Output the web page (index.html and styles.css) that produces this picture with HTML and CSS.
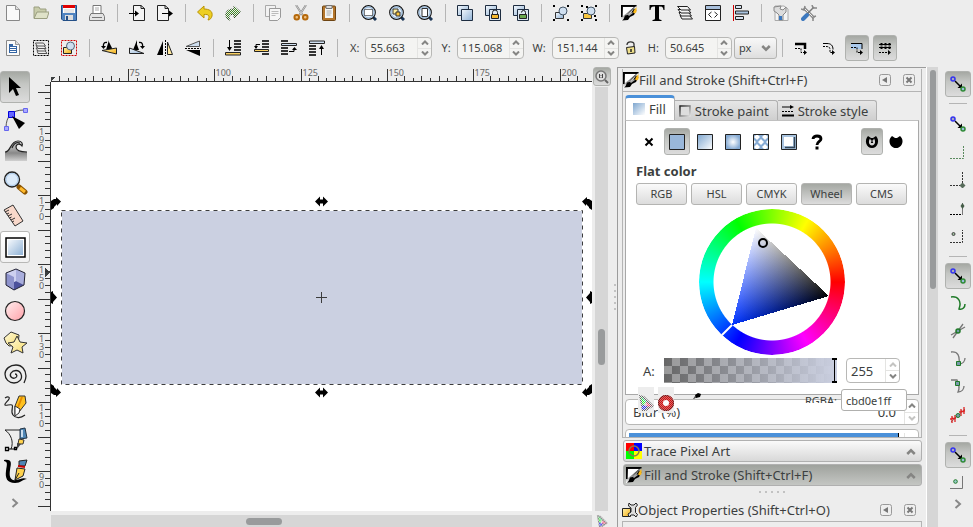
FILE: index.html
```html
<!DOCTYPE html>
<html lang="en">
<head>
    <meta charset="UTF-8">
    <meta name="viewport" content="width=device-width, initial-scale=1.0">
    <title>Vector editor</title>
    <link rel="stylesheet" href="styles.css">
</head>
<body>
    <svg class="defs" width="0" height="0" aria-hidden="true">
        <defs>
            <linearGradient id="gBlue" x1="0" y1="0" x2="1" y2="1"><stop offset="0" stop-color="#f4f8fc"/><stop offset="1" stop-color="#8fb2d6"/></linearGradient>
            <linearGradient id="gSteel" x1="0" y1="0" x2="1" y2="1"><stop offset="0" stop-color="#7ea6cf"/><stop offset="1" stop-color="#ffffff"/></linearGradient>
            <linearGradient id="gGold" x1="0" y1="0" x2="1" y2="1"><stop offset="0" stop-color="#fff3b0"/><stop offset="1" stop-color="#f5ae10"/></linearGradient>
            <linearGradient id="gStar" x1="0" y1="0" x2="1" y2="1"><stop offset="0" stop-color="#fffbe0"/><stop offset="1" stop-color="#f7dc6a"/></linearGradient>
            <linearGradient id="gInk" x1="0" y1="0" x2="0" y2="1"><stop offset="0" stop-color="#000"/><stop offset="1" stop-color="#fff"/></linearGradient>
            <linearGradient id="gFrame" x1="0" y1="0" x2="1" y2="1"><stop offset="0" stop-color="#222"/><stop offset="1" stop-color="#ddd"/></linearGradient>
            <radialGradient id="gRadial"><stop offset="0" stop-color="#fff"/><stop offset="1" stop-color="#86abd4"/></radialGradient>
            <linearGradient id="gWave" x1="0" y1="0" x2="0" y2="1"><stop offset="0" stop-color="#e4e4e4"/><stop offset=".6" stop-color="#888"/><stop offset="1" stop-color="#d0d0d0"/></linearGradient>
            <linearGradient id="gPink" x1="0" y1="0" x2="1" y2="1"><stop offset="0" stop-color="#fff0f0"/><stop offset="1" stop-color="#ffa0a8"/></linearGradient>
            <pattern id="dither" width="2" height="2" patternUnits="userSpaceOnUse"><path d="M0 0h1v1H0zM1 1h1v1H1z" fill="#ededed"/></pattern>
            <symbol id="up" viewBox="0 0 8 5"><path d="M1 4.5 4 1.5 7 4.5" fill="none" stroke="currentColor" stroke-width="2"/></symbol>
            <symbol id="down" viewBox="0 0 8 5"><path d="M1 .5 4 3.5 7 .5" fill="none" stroke="currentColor" stroke-width="2"/></symbol>
            <symbol id="right" viewBox="0 0 8 10"><path d="M1.5 1 6 5 1.5 9" fill="none" stroke="#888" stroke-width="2"/></symbol>
            <symbol id="brush" viewBox="0 0 16 16">
                <path d="M0 0h15.500L8 9 1 16H0z" fill="url(#gInk)"/><path d="M0 0h15.500v1.500H0zM0 0h1.500v12H0z"/><path d="M2 2h11L6 8l-4 3z" fill="#fff"/>
                <path d="M1 15.500c2-1 2-3 3-5l5-1 4-6 2.500 1.500-2.500 5-4 2-2 3z"/><path d="M7 10l4-3 1 1-4 3z" fill="#aaa"/><path d="M13 5l2.500-3v5l-1.500 1.500-2-1z" fill="#fbb917"/>
            </symbol>
            <symbol id="chain" viewBox="0 0 16 16">
                <path d="M5 5l5 5" stroke="#000" stroke-width="1.500"/><path d="M12 12H7.500L12 7.500z" fill="#000"/>
                <circle cx="3" cy="3" r="2" fill="#aab" stroke="#3333f0" stroke-width="1.500"/><circle cx="13" cy="13" r="2" fill="#9bd" stroke="#2f8a36" stroke-width="1.500"/>
            </symbol>
            <symbol id="glass" viewBox="0 0 16 16"><path d="M11 11l4 4" stroke="#1b3555" stroke-width="3"/><circle cx="7.500" cy="7.500" r="6.800" fill="#e4eef8" stroke="#111" stroke-width="1.200"/><circle cx="7.500" cy="7.500" r="5.500" fill="none" stroke="#9dbbd9" stroke-width="1.300"/></symbol>
            <symbol id="back" viewBox="0 0 12 12"><rect x=".5" y=".5" width="11" height="11" rx="2" fill="#eee" stroke="#999"/><path d="M8 3v6L3 6z" fill="#777"/></symbol>
            <symbol id="close" viewBox="0 0 12 12"><rect x=".5" y=".5" width="11" height="11" rx="2" fill="#eee" stroke="#999"/><path d="M3.500 3.500l5 5M8.500 3.500l-5 5" stroke="#777" stroke-width="2"/></symbol>
            <symbol id="gamut" viewBox="0 0 16 16"><path d="M1 0l5 1 10 10-8 5H4z" fill="#666"/><path d="M3 2l5 5-3 5z" fill="#2f2"/><path d="M3 2l6 5-1 2z" fill="#3d8"/><path d="M8 7l6 4-7 1z" fill="#f36"/><path d="M4 10l5 1-2 4-3-1z" fill="#22e"/><path d="M6 8l3 1-2 2z" fill="#fff"/><path d="M0 0h16v16H0z" fill="url(#dither)"/></symbol>
        </defs>
    </svg>

    <nav class="toolbar commands" aria-label="Commands">
        <button title="New"><svg viewBox="0 0 16 16"><path d="M1.500.5h9l4 4v11h-13z" fill="#fafafa" stroke="#888"/><path d="M10.500.5v4h4" fill="#ddd" stroke="#999"/></svg></button>
        <button title="Open"><svg viewBox="0 0 16 16"><path d="M1 13V2h5l1 2h6v4" fill="#c8ccaa" stroke="#9a9e80"/><path d="M1 13.500 4 7h12l-2 6.500z" fill="#dfe2c8" stroke="#9a9e80"/></svg></button>
        <button title="Save"><svg viewBox="0 0 16 16"><path d="M.5.5h15v15H2l-1.500-1.500z" fill="#4f83c0" stroke="#234f86"/><path d="M2 0h12v3H2z" fill="#e00000"/><path d="M2 3h12v5H2z" fill="#fff"/><path d="M3 5h10M3 7h10" stroke="#ccc"/><path d="M4 10h8v5H4z" fill="#ddd"/><path d="M5 11h2v4H5z" fill="#234f86"/></svg></button>
        <button title="Print"><svg viewBox="0 0 16 16"><path d="M4 8V.5h8V8" fill="#fff" stroke="#777"/><path d="M6 3h4M6 5h4" stroke="#aaa"/><path d="M2 8.500h12l1.500 3v4H.5v-4z" fill="#e4e4e4" stroke="#777"/><path d="M3 12.500h10" stroke="#777"/></svg></button>
        <span class="sep"></span>
        <button title="Import"><svg viewBox="0 0 16 16"><path d="M4.500.5H12l3.500 3v12h-11z" fill="#f4f4f4" stroke="#222"/><path d="M12 .5v3h3.500" fill="none" stroke="#222"/><path d="M0 8.500h7" stroke="#000"/><path d="M6 5.500 10 8.500l-4 3z"/></svg></button>
        <button title="Export"><svg viewBox="0 0 16 16"><path d="M.5.5H8l3.500 3v12H.5z" fill="#f4f4f4" stroke="#222"/><path d="M8 .5v3h3.500" fill="none" stroke="#222"/><path d="M5 8.500h8" stroke="#000"/><path d="M12 5.500 16 8.500l-4 3z"/></svg></button>
        <span class="sep"></span>
        <button title="Undo"><svg viewBox="0 0 16 16"><path d="M.5 7 7 1v3c5 0 9 2 8 7-.5 2-2 4-4 4 2-4 1-6-4-5.500V13z" fill="#edcf22" stroke="#b99305"/></svg></button>
        <button title="Redo"><svg viewBox="0 0 16 16"><path d="M15.500 7 9 1v3C4 4 0 6 1 11c.5 2 2 4 4 4-2-4-1-6 4-5.500V13z" fill="#3f8a24" stroke="#2c4a20"/><path d="M0 0h16v16H0z" fill="url(#dither)"/></svg></button>
        <span class="sep"></span>
        <button title="Copy"><svg viewBox="0 0 16 16"><path d="M.5.5h10v11H.5z" fill="#f2f2f2" stroke="#aaa"/><path d="M4.500 3.500h11v9l-3 3h-8z" fill="#f6f6f6" stroke="#999"/><path d="M6.500 6.500h7M6.500 8.500h7M6.500 10.500h4" stroke="#bbb"/></svg></button>
        <button title="Cut"><svg viewBox="0 0 16 16"><path d="M3 0l6.500 10M13 0 6.500 10" stroke="#888" stroke-width="2"/><path d="M3 0l6.500 10M13 0 6.500 10" stroke="#ddd" stroke-width=".8"/><g fill="#f0c080" stroke="#b5690c" stroke-width="2"><rect x="1.500" y="10" width="4.500" height="4.500" rx="2"/><rect x="10" y="10" width="4.500" height="4.500" rx="2"/></g></svg></button>
        <button title="Paste"><svg viewBox="0 0 16 16"><rect x="1.500" y="1" width="13" height="14.500" rx="1" fill="#b5762b" stroke="#6d4412"/><path d="M4 3h8v10H4z" fill="#f6f6f2"/><path d="M5.500 6h5M5.500 8h5M5.500 10h4" stroke="#aaa"/><path d="M5 .5h6v3H5z" fill="#ddd" stroke="#777"/></svg></button>
        <span class="sep"></span>
        <button title="Zoom selection"><svg viewBox="0 0 16 16"><use href="#glass"/><path d="M3.500 4.500h8v6h-8z" fill="#fff" stroke="#000" stroke-dasharray="1 1"/></svg></button>
        <button title="Zoom drawing"><svg viewBox="0 0 16 16"><use href="#glass"/><path d="M4 4h5v5H4z" fill="#fff0a0" stroke="#333"/><path d="M7 7h4v4H7z" fill="#fbc53b" stroke="#333"/></svg></button>
        <button title="Zoom page"><svg viewBox="0 0 16 16"><use href="#glass"/><path d="M5 3.500h5.500v8H5z" fill="#fff" stroke="#333"/></svg></button>
        <span class="sep"></span>
        <button title="Duplicate"><svg viewBox="0 0 16 16"><path d="M.5.5h11v10H.5z" fill="url(#gBlue)" stroke="#1d2c40"/><path d="M4.500 4.500h11v11h-11z" fill="url(#gBlue)" stroke="#1d2c40"/></svg></button>
        <button title="Clone"><svg viewBox="0 0 16 16"><path d="M.5.5h11v10H.5z" fill="url(#gBlue)" stroke="#1d2c40"/><path d="M4.500 4.500h11v11h-11z" fill="#dde8f3" stroke="#1d2c40"/><path d="M7.500 9V7.500a2 2 0 0 1 5 0V9" fill="none" stroke="#222"/><path d="M6.500 9.500h7v4h-7z" fill="#f5b82e" stroke="#222"/></svg></button>
        <button title="Unlink clone"><svg viewBox="0 0 16 16"><path d="M.5.5h11v10H.5z" fill="url(#gBlue)" stroke="#1d2c40"/><path d="M4.500 4.500h11v11h-11z" fill="#dde8f3" stroke="#1d2c40"/><path d="M8.500 7.500a2 2 0 0 1 4 0V9" fill="none" stroke="#222"/><path d="M6.500 9.500h7v4h-7z" fill="#6aa84f" stroke="#222"/></svg></button>
        <span class="sep"></span>
        <button title="Group"><svg viewBox="0 0 16 16"><path d="M0 0h2v2H0zM14 0h2v2h-2zM0 14h2v2H0zM14 14h2v2h-2z"/><path d="M2.500 7.500h8v6h-8z" fill="url(#gBlue)" stroke="#333"/><circle cx="10" cy="6" r="4" fill="#cfdff0" stroke="#456"/></svg></button>
        <button title="Ungroup"><svg viewBox="0 0 16 16"><path d="M0 0h2v2H0zM14 0h2v2h-2zM0 14h2v2H0zM14 14h2v2h-2zM5 1h2v2H5zM13 10h2v2h-2zM0 6h2v2H0z"/><path d="M2.500 8.500h8v5h-8z" fill="#f8c740" stroke="#333"/><circle cx="10" cy="6" r="4" fill="#cfdff0" stroke="#456"/></svg></button>
        <span class="sep"></span>
        <button title="Fill and stroke"><svg viewBox="0 0 16 16"><use href="#brush"/></svg></button>
        <button title="Text and font"><svg viewBox="0 0 16 16"><path d="M.5 0h15v5h-1c-.5-3-1-3.500-4.500-3.500V13c0 1.500.5 1.700 2.500 2v1h-9v-1c2-.3 2.500-.5 2.500-2V1.500C2.500 1.500 2 2 1.500 5h-1z"/></svg></button>
        <button title="Layers"><svg viewBox="0 0 16 16"><g fill="#f4f4f4" stroke="#222"><path d="M3 10.500h9.500l3 3.500H5z"/><path d="M2 7.500h9.500l3 3.500H4z"/><path d="M1 4.500h10l3 3.500H4z"/><path d="M.5 1.500h10l3 3.500H4z"/></g></svg></button>
        <button title="XML editor"><svg viewBox="0 0 16 16"><path d="M.5.5h15v15H.5z" fill="#fff" stroke="#222"/><path d="M1 1h14v3H1z" fill="#a9c0dc"/><path d="M1 4.500h14" stroke="#222"/><path d="M6.500 7 3.500 9.500l3 3M9.500 7l3 2.500-3 3" fill="none" stroke="#222"/></svg></button>
        <button title="Align"><svg viewBox="0 0 16 16"><path d="M.5 0v16" stroke="#d00000"/><path d="M2.500.5h6v3h-6zM2.500 11.500h8v3h-8z" fill="#d5e2f0" stroke="#222"/><path d="M2.500 6h13v3h-13z" fill="#a9c4e0" stroke="#222"/></svg></button>
        <span class="sep"></span>
        <button title="Document properties"><svg viewBox="0 0 16 16"><path d="M2 1h9l4 3v11.500H2z" fill="#f5f5f5" stroke="#aaa"/><path d="M1 2v4l3 2 2 2v5h4v-5l3-3V2l-3 3-3-1 1-3z" fill="#ddd" stroke="#888"/><path d="M6 11h3v4H6z" fill="#3c78be"/></svg></button>
        <button title="Preferences"><svg viewBox="0 0 16 16"><path d="M3 3l10 10" stroke="#888" stroke-width="3"/><path d="M3 3l10 10" stroke="#eee"/><path d="M13 2 5 10" stroke="#777" stroke-width="1.500"/><path d="M6 10 2 14" stroke="#3c78be" stroke-width="4" stroke-linecap="round"/><path d="M0 4l3 1 1-4M15 11l-3 1v4M11 0l1 3h4" fill="none" stroke="#888" stroke-width="1.500"/></svg></button>
    </nav>

    <nav class="toolbar controls" aria-label="Tool controls">
        <button title="Select all"><svg viewBox="0 0 16 16"><path d="M1.500.5h9l4 4v11h-13z" fill="#fafafa" stroke="#888"/><path d="M10.500.5v4h4" fill="#ddd" stroke="#999"/><path d="M4 4h4v2H4zM4 6h8v7H4z" fill="#3465a4"/><path d="M5 7.500h6M5 9.500h6M5 11.500h6" stroke="#fff"/></svg></button>
        <button title="Select all in layers"><svg viewBox="0 0 16 16"><path d="M.5.5h15v15H.5z" fill="none" stroke="#000" stroke-dasharray="2 1"/><g fill="#eee" stroke="#555"><path d="M4 10.500h8l2 3H5z"/><path d="M3 8h8l2 3H5z"/><path d="M3 5.500h8l2 3H5z"/><path d="M2.500 3h8l2 3H4z"/></g></svg></button>
        <button title="Deselect"><svg viewBox="0 0 16 16"><path d="M.5.5h15v15H.5z" fill="none" stroke="#d00000" stroke-dasharray="2 1"/><path d="M2.500 7.500h8v6h-8z" fill="url(#gGold)" stroke="#222"/><circle cx="9.500" cy="6" r="4" fill="#cfdff0" stroke="#567"/></svg></button>
        <span class="sep"></span>
        <button title="Rotate left"><svg viewBox="0 0 16 16"><path d="M8 0v10H5zM8 10V2l4 8z"/><path d="M1 10.500 15.500 8v6z" fill="url(#gGold)" stroke="#222"/><path d="M6 2.500C3 2 2 4 2.500 7" fill="none" stroke="#000" stroke-width="1.300"/><path d="M0 6h5L2.500 9z"/></svg></button>
        <button title="Rotate right"><svg viewBox="0 0 16 16"><path d="M8 0v10H4zM7 10V2l3 8z"/><path d="M15 13.500.5 8v5.500z" fill="url(#gBlue)" stroke="#222"/><path d="M10 2.500c3-.5 4 1.500 3.500 4.500" fill="none" stroke="#000" stroke-width="1.300"/><path d="M11 6h5l-2.500 3z"/></svg></button>
        <button title="Flip horizontal"><svg viewBox="0 0 16 16"><path d="M6 1v14H0z"/><path d="M10.500 2v12.500h5z" fill="#ffe9a0" stroke="#222"/><path d="M8.500 0v16" stroke="#000" stroke-dasharray="2 1"/></svg></button>
        <button title="Flip vertical"><svg viewBox="0 0 16 16"><path d="M1 10h14v6z"/><path d="M1 6.500h13.500V1z" fill="#cfdff0" stroke="#555"/><path d="M0 8.500h16" stroke="#000" stroke-dasharray="2 1"/></svg></button>
        <span class="sep"></span>
        <button title="Lower to bottom"><svg viewBox="0 0 16 16"><path d="M9 1h7M9 4h7M9 7h7M9 10h7" stroke="#333" stroke-width="2"/><path d="M4.500 0v9" stroke="#000"/><path d="M2 7h5l-2.500 4z"/><path d="M.5 12.500h15v2.500H.5z" fill="#f8cf62" stroke="#222"/></svg></button>
        <button title="Lower"><svg viewBox="0 0 16 16"><path d="M9 1h7M9 4h7M9 7h7M9 14h7" stroke="#333" stroke-width="2"/><path d="M1.500 9.500h14v2h-14z" fill="#f8cf62" stroke="#222"/><path d="M7 4.500H3V8" fill="none" stroke="#000"/><path d="M1 6h4L3 9z"/></svg></button>
        <button title="Raise"><svg viewBox="0 0 16 16"><path d="M0 1h7M0 8h7M0 11h7M0 14h7" stroke="#333" stroke-width="2"/><path d="M.5 3.500h15v2H.5z" fill="#cfdff0" stroke="#222"/><path d="M8 11.500h5V8" fill="none" stroke="#000"/><path d="M11 10h5l-2.500-3z"/></svg></button>
        <button title="Raise to top"><svg viewBox="0 0 16 16"><path d="M0 6h7M0 9h7M0 12h7M0 15h7" stroke="#333" stroke-width="2"/><path d="M.5 1h15v2.500H.5z" fill="#cfdff0" stroke="#222"/><path d="M12.500 6v9" stroke="#000"/><path d="M10 9h5l-2.500-4z"/></svg></button>
        <span class="sep"></span>
        <div class="field"><label for="x">X:</label><div class="spin"><input id="x" type="text" value="55.663"><span class="steps"><button title="Increase X"><svg><use href="#up"/></svg></button><button title="Decrease X"><svg><use href="#down"/></svg></button></span></div></div>
        <div class="field"><label for="y">Y:</label><div class="spin"><input id="y" type="text" value="115.068"><span class="steps"><button title="Increase Y"><svg><use href="#up"/></svg></button><button title="Decrease Y"><svg><use href="#down"/></svg></button></span></div></div>
        <div class="field"><label for="w">W:</label><div class="spin"><input id="w" type="text" value="151.144"><span class="steps"><button title="Increase width"><svg><use href="#up"/></svg></button><button title="Decrease width"><svg><use href="#down"/></svg></button></span></div></div>
        <button class="lock" title="Lock ratio"><svg viewBox="0 0 16 16"><path d="M4 5c0-4 7-4 7-1v4" fill="none" stroke="#333" stroke-width="1.300"/><path d="M3.500 7.500l8-1 .5 6.500-7.500 1z" fill="#f0e08a" stroke="#222"/><path d="M8 9v3" stroke="#222" stroke-width="1.500"/></svg></button>
        <div class="field"><label for="h">H:</label><div class="spin"><input id="h" type="text" value="50.645"><span class="steps"><button title="Increase height"><svg><use href="#up"/></svg></button><button title="Decrease height"><svg><use href="#down"/></svg></button></span></div></div>
        <div class="unit"><select aria-label="Unit"><option>px</option></select><svg><use href="#down"/></svg></div>
        <span class="sep"></span>
        <button title="Scale stroke"><svg viewBox="0 0 16 16"><path d="M2 4h10v5" fill="none" stroke="#000" stroke-width="2.500"/><path d="M2 8.500h6v4h5" fill="none" stroke="#000" stroke-dasharray="2 1"/><path d="M11 10l3 2.500-3 2.500z"/></svg></button>
        <button title="Scale corners"><svg viewBox="0 0 16 16"><path d="M2 3.500h4c4 0 6 2 6 6" fill="none" stroke="#000"/><path d="M2 6.500h3c3 0 4 1 4 3v3h4" fill="none" stroke="#000" stroke-dasharray="2 1"/><path d="M11 10l3 2.500-3 2.500z"/></svg></button>
        <button class="on" title="Move gradients"><svg viewBox="0 0 16 16"><path d="M2 4h11v5H2z" fill="#a9c9ec"/><path d="M2 3.500h11V9" fill="none" stroke="#000"/><path d="M2 7.500h6v5h5" fill="none" stroke="#000" stroke-dasharray="2 1"/><path d="M11 10l3 2.500-3 2.500z"/></svg></button>
        <button class="on" title="Move patterns"><svg viewBox="0 0 16 16"><path d="M2 4.500h12M2 7.500h12" stroke="#000"/><path d="M4.500 3v6M8.500 3v6M12.500 3v6" stroke="#000" stroke-width="2" stroke-dasharray="2.500 1"/><path d="M2 12.500h9" stroke="#000" stroke-dasharray="2 1"/><path d="M11 10l3 2.500-3 2.500z"/></svg></button>
    </nav>

    <main class="workspace">
        <nav class="toolbox" aria-label="Tools">
            <button class="on" title="Select"><svg viewBox="0 0 26 26"><path d="M7 3v16l4-4 3 7 3-1-3-7h5z"/></svg></button>
            <button title="Edit nodes"><svg viewBox="0 0 26 26"><path d="M4 22c0-12 6-18 18-18" fill="none" stroke="#555"/><path d="M2.500 20.500h4v4h-4zM21.500 2.500h4v4h-4z" fill="#aaf" stroke="#66e"/><path d="M6.500 5.500h6v6h-6z" fill="#66f" stroke="#00d"/><path d="M10 10l13 7-6 6z"/></svg></button>
            <button title="Tweak"><svg viewBox="0 0 26 26"><path d="M3 14c6 0 5-11 13-11 4 0 5 3 4 5-2-3-6-2-6 1s4 5 11 5v9H3z" fill="url(#gWave)"/><path d="M3 14c6 0 5-11 13-11 4 0 5 3 4 5-2-3-6-2-6 1s4 5 11 5M10 10c2-5 5-6 8-5" fill="none" stroke="#222" stroke-width="1.200"/></svg></button>
            <button title="Zoom"><svg viewBox="0 0 26 26"><path d="M17 17l6 5" stroke="#8a5300" stroke-width="5" stroke-linecap="round"/><path d="M18 18l5 4" stroke="#ffb92b" stroke-width="3"/><circle cx="10" cy="9.500" r="7.500" fill="#dcebfa" stroke="#222" stroke-width="1.400"/><circle cx="10" cy="9.500" r="6" fill="none" stroke="#a9c8e8"/></svg></button>
            <button title="Measure"><svg viewBox="0 0 26 26"><path d="M2 8l9-5 10 16-8 5z" fill="#f8d8ca" stroke="#333"/><path d="M3 10l4-2M5 12l2-1M6 14l4-2M7.500 16l2-1M9 18l4-2M10 20l2-1" stroke="#333"/></svg></button>
            <button class="lit" title="Rectangle"><svg viewBox="0 0 26 26"><path d="M4 4h19v19H4z" fill="#fff" stroke="#000" stroke-width="1.500"/><path d="M6 6h15v15H6z" fill="url(#gBlue)"/></svg></button>
            <button title="3D box"><svg viewBox="0 0 26 26"><path d="M14 3v12l8 4 1-12z" fill="#a9aedd"/><path d="M14 15 4 19l8 5 10-5z" fill="#4c519c"/><path d="M4 7l10-4v12L4 19z" fill="#cdd0f0"/><path d="M12 11v13L4 19V7z" fill="#8e93cc"/><path d="M4 7l10-4 9 4-1 12-10 5-8-5z" fill="none" stroke="#223"/></svg></button>
            <button title="Ellipse"><svg viewBox="0 0 26 26"><circle cx="13" cy="13" r="9.500" fill="url(#gPink)" stroke="#222" stroke-width="1.200"/></svg></button>
            <button title="Star"><svg viewBox="0 0 26 26"><path d="M2 8l7-6 8 3-1 10-9 1-3-3z" fill="url(#gStar)" stroke="#333"/><path d="M15 6l3 6 7 1-5 4 1 6-6-3-6 3 2-6-5-4 6-1z" fill="url(#gStar)" stroke="#333"/></svg></button>
            <button title="Spiral"><svg viewBox="0 0 26 26"><path d="M13 12c2 0 3 3 0 4s-6-2-4-5 8-4 10 1-2 9-7 9-9-4-9-9 5-9 11-9 10 5 10 11c0 3-1 5-2 7" fill="none" stroke="#222" stroke-width="1.300"/></svg></button>
            <button title="Pencil"><svg viewBox="0 0 26 26"><path d="M3 4c3-2 5-1 4 1s-5 5-4 6 5-1 7 0-2 6 1 10 8 3 12 0" fill="none" stroke="#222" stroke-width="1.200"/><path d="M13 12 17 2l6 0 1 7-7 9-4 3z" fill="#ffc11f" stroke="#333"/><path d="M13 12l5 3-1 4-4 3z" fill="#fff" stroke="#333"/><path d="M20 3l-4 10" stroke="#e58b00" stroke-width="2"/></svg></button>
            <button title="Pen"><svg viewBox="0 0 26 26"><path d="M3 4h15M3 4c6 4 9 12 6 19" fill="none" stroke="#222"/><path d="M5 23h9" stroke="#000"/><path d="M3.500 21.500h3v3h-3zM12.500 21.500h2v2h-2z" fill="#fff" stroke="#000" stroke-width="1.300"/><path d="M18 3l5-1 2 10-7 1z" fill="#4f86b5" stroke="#234"/><path d="M20 4v7" stroke="#cde" stroke-width="2"/><path d="M17 13l5 1-1 4-5 0z" fill="#ffd24d" stroke="#333"/><path d="M15 17l4 1-4 5z" fill="#444"/></svg></button>
            <button title="Calligraphy"><svg viewBox="0 0 26 26"><path d="M2 2c9-1 7 4 6 10s0 11 6 10c5-1 7-3 11-1-4 0-6 4-12 4C5 25 3 20 4 13S6 4 2 3z"/><path d="M17 3l8-1-2 6-6 0z" fill="#4f86b5" stroke="#222"/><path d="M16 8l7 1" stroke="#c00" stroke-width="2"/><path d="M15 10l8 1-2 7-8 4z" fill="#ffd24d" stroke="#222"/><path d="M13 22l4-7" stroke="#222"/></svg></button>
            <button class="more" title="More tools"><svg><use href="#right"/></svg></button>
        </nav>

        <section class="editor">
            <svg class="hruler" id="hruler"><path class="mark" d="M0 10h5L0 14z"/></svg>
            <svg class="vruler" id="vruler"><path class="mark" d="M7 186v9l5-4z"/></svg>
            <svg class="canvas" role="img" aria-label="Drawing">
                <rect class="shape" x="11" y="129" width="520" height="173"/>
                <path class="outline-gap" d="M10.500 128.500h521v174h-521z"/>
                <path class="outline" d="M10.500 128.500h521v174h-521z"/>
                <path class="cross" d="M265 215.500h11M270.500 210v11"/>
                <g>
                    <path id="side" d="M264 119.500l5-5v3h3v-3l5 5-5 5v-3h-3v3z"/>
                    <use href="#side" y="191"/>
                    <path id="corner" d="M0 119l3-2h2v-2l5 4.500-4 4.500v-2l-3 3v1l-3 2z"/>
                    <use href="#corner" transform="matrix(-1 0 0 1 541 0)"/>
                    <use href="#corner" transform="matrix(1 0 0 -1 0 430)"/>
                    <use href="#corner" transform="matrix(-1 0 0 -1 541 430)"/>
                    <path d="M0 210l2-1v2l4 4.500-4 4.500v2l-2-1zM541 210l-2-1v2l-4 4.500 4 4.500v2l2-1z"/>
                </g>
            </svg>
            <div class="hscroll"><span class="thumb"></span></div>
            <div class="side">
                <button class="on" title="Sticky zoom"><svg viewBox="0 0 16 16"><circle cx="7" cy="7" r="5" fill="#ddd" stroke="#777" stroke-width="1.500"/><path d="M11 11l3 3" stroke="#666" stroke-width="2"/><path d="M5.500 5v4M8.500 5v4M7 6v.8M7 8v.8" stroke="#444"/></svg></button>
                <div class="vscroll"><span class="thumb"></span></div>
                <svg class="cms" viewBox="0 0 16 16"><use href="#gamut"/></svg>
            </div>
        </section>

        <div class="splitter"><i></i><i></i><i></i><i></i><i></i></div>

        <aside class="dock">
            <header class="dock-title framed">
                <svg class="ic"><use href="#brush"/></svg>
                <h2>Fill and Stroke (Shift+Ctrl+F)</h2>
                <button title="Iconify"><svg><use href="#back"/></svg></button>
                <button title="Close"><svg><use href="#close"/></svg></button>
            </header>
            <section class="fill-stroke">
                <div class="tabs" role="tablist">
                    <button class="tab active" role="tab" aria-selected="true"><svg viewBox="0 0 12 12"><path d="M0 0h12v12H0z" fill="url(#gSteel)"/></svg>Fill</button>
                    <button class="tab" role="tab"><svg viewBox="0 0 12 12"><path d="M1 1h10v10H1z" fill="#ddd" stroke="url(#gFrame)" stroke-width="1.500"/></svg>Stroke paint</button>
                    <button class="tab" role="tab"><svg viewBox="0 0 12 12"><path d="M0 2h9" stroke="#000"/><path d="M8 0l4 2-4 2z"/><path d="M0 6.500h12" stroke="#000" stroke-dasharray="2 1"/><path d="M0 10.500h12" stroke="#000" stroke-width="2"/></svg>Stroke style</button>
                </div>
                <div class="page">
                    <div class="paints">
                        <button title="No paint"><svg viewBox="0 0 16 16"><path d="M4.500 4.500l7 7M11.500 4.500l-7 7" stroke="#000" stroke-width="2"/></svg></button>
                        <button class="on" title="Flat color"><svg viewBox="0 0 16 16"><path d="M.5.5h15v15H.5z" fill="#99b7da" stroke="#222"/></svg></button>
                        <button title="Linear gradient"><svg viewBox="0 0 16 16"><path d="M.5.5h15v15H.5z" fill="url(#gSteel)" stroke="#222"/></svg></button>
                        <button title="Radial gradient"><svg viewBox="0 0 16 16"><path d="M.5.5h15v15H.5z" fill="url(#gRadial)" stroke="#222"/></svg></button>
                        <button title="Pattern"><svg viewBox="0 0 16 16"><path d="M.5.5h15v15H.5z" fill="#86abd4"/><path d="M4 0l3 3-3 3-3-3zM12 0l3 3-3 3-3-3zM8 5l3 3-3 3-3-3zM0 5l3 3-3 3zM16 5l-3 3 3 3zM4 10l3 3-3 3-3-3zM12 10l3 3-3 3-3-3z" fill="#fff"/><path d="M.5.5h15v15H.5z" fill="none" stroke="#222"/></svg></button>
                        <button title="Swatch"><svg viewBox="0 0 16 16"><path d="M.5.5h15v15H.5z" fill="#a9c4e0" stroke="#222"/><path d="M3 3h9v9H3z" fill="#fff"/><path d="M13.500 3v10.500H4" fill="none" stroke="#345" stroke-width="1.500"/></svg></button>
                        <button title="Unset"><svg viewBox="0 0 16 16"><path d="M4 5c0-4 8-4 8 0 0 2.500-4 2.500-4 6" fill="none" stroke="#000" stroke-width="2.800"/><path d="M6.500 12.500h3v3h-3z"/></svg></button>
                        <span class="rule-group">
                            <button class="on" title="Even-odd"><svg viewBox="0 0 16 16"><path d="M4 2l3 2h2l3-2c4 4 2 12-4 12S0 6 4 2z"/><path d="M6 4.500l1 2h2l1-2c2 3 1 7-2 7s-4-4-2-7z" fill="#d4d4d4"/><path d="M8 6l1.200 3H6.800z"/></svg></button>
                            <button title="Nonzero"><svg viewBox="0 0 16 16"><path d="M4 2l3 2h2l3-2c5 4 2 12-4 12S-1 6 4 2z"/></svg></button>
                        </span>
                    </div>
                    <h3>Flat color</h3>
                    <div class="modes">
                        <button>RGB</button>
                        <button>HSL</button>
                        <button>CMYK</button>
                        <button class="on">Wheel</button>
                        <button>CMS</button>
                    </div>
                    <div class="wheel">
                        <svg viewBox="0 0 146 146">
                            <defs>
                                <linearGradient id="toHue" gradientUnits="userSpaceOnUse" x1="92" y1="52" x2="33" y2="116"><stop offset="0" stop-color="#000"/><stop offset="1" stop-color="#0033ff"/></linearGradient>
                                <linearGradient id="toWhite" gradientUnits="userSpaceOnUse" x1="82" y1="102" x2="57" y2="19"><stop offset="0" stop-color="#000"/><stop offset="1" stop-color="#fff"/></linearGradient>
                            </defs>
                            <g class="mix">
                                <path d="M57 19l73 68-97 29z" fill="url(#toHue)" shape-rendering="crispEdges"/>
                                <path class="add" d="M57 19l73 68-97 29z" fill="url(#toWhite)" shape-rendering="crispEdges"/>
                            </g>
                            <path d="M33 116l-10 10" stroke="#fff" stroke-width="2"/>
                            <circle cx="64" cy="34" r="4" fill="none" stroke="#000" stroke-width="2"/>
                        </svg>
                    </div>
                    <div class="alpha">
                        <label for="alpha">A:</label>
                        <input id="alpha" type="range" min="0" max="255" value="255">
                        <div class="spin tall"><input type="text" value="255" aria-label="Alpha value"><span class="steps"><button class="off" title="Increase alpha"><svg><use href="#up"/></svg></button><button title="Decrease alpha"><svg><use href="#down"/></svg></button></span></div>
                    </div>
                </div>
                <div class="spin wide">
                    <label for="blur">Blur (%)</label><input id="blur" type="text" value="0.0"><span class="steps"><button title="Increase blur"><svg><use href="#up"/></svg></button><button class="off" title="Decrease blur"><svg><use href="#down"/></svg></button></span>
                </div>
                <div class="spin wide opacity"><span class="bar"></span><span class="steps"><button class="off" title="Increase opacity"><svg><use href="#up"/></svg></button></span></div>
                <div class="overlay">
                    <button title="Color managed"><svg viewBox="0 0 16 16"><use href="#gamut"/></svg></button>
                    <button title="Out of gamut"><svg viewBox="0 0 16 16"><circle cx="8" cy="8" r="5.500" fill="#fff" stroke="#c11" stroke-width="5"/><circle cx="8" cy="8" r="7.500" fill="none" stroke="#611"/><path d="M0 0h16v16H0z" fill="url(#dither)" opacity=".4"/></svg></button>
                    <svg class="dropper" viewBox="0 0 8 6"><path d="M0 6l2-3 2 1-3 2z" fill="#555"/><path d="M2 2l3-2 3 1-1 3-4 1z"/></svg>
                    <label class="rgba" for="rgba">RGBA:</label>
                    <input id="rgba" type="text" value="cbd0e1ff">
                </div>
            </section>
            <button class="bar-item"><svg class="ic" viewBox="0 0 16 16"><path d="M0 0h8v8H0z" fill="#f00"/><path d="M8 0h8v8H8z" fill="#00f"/><path d="M0 8h8v8H0z" fill="#0f0"/><path d="M8 8h8v8H8z" fill="#ff0"/><circle cx="8" cy="8" r="5" fill="none" stroke="#8a7a50" stroke-width="1.500"/></svg>Trace Pixel Art<svg class="chev"><use href="#up"/></svg></button>
            <button class="bar-item on"><svg class="ic"><use href="#brush"/></svg>Fill and Stroke (Shift+Ctrl+F)<svg class="chev"><use href="#up"/></svg></button>
            <div class="grip"><i></i><i></i><i></i><i></i><i></i></div>
            <header class="dock-title">
                <svg class="ic" viewBox="0 0 16 16"><path d="M.5 6.500h8v8h-8z" fill="url(#gGold)" stroke="#222"/><path d="M7 1l2 2h3l2-2 1.500 2-2 2.500v5l2 2-1.500 2.500-2-2H9l-2 2-1-3 3-2V6L6.500 4z" fill="#ddd" stroke="#222"/></svg>
                <h2>Object Properties (Shift+Ctrl+O)</h2>
                <button title="Iconify"><svg><use href="#back"/></svg></button>
                <button title="Close"><svg><use href="#close"/></svg></button>
            </header>
            <section class="props"></section>
        </aside>

        <div class="dock-scroll"><span class="thumb"></span></div>

        <nav class="snapbar" aria-label="Snap controls">
            <button class="on" title="Enable snapping"><svg><use href="#chain"/></svg></button>
            <span class="rule"></span>
            <button title="Snap bounding boxes"><svg><use href="#chain"/></svg></button>
            <button title="Snap to edges"><svg viewBox="0 0 16 16"><path d="M0 14.500h13.500V1" fill="none" stroke="#5a8a5e" stroke-dasharray="2 1"/></svg></button>
            <button title="Snap to corners"><svg viewBox="0 0 16 16"><path d="M0 13.500h12.500V0" fill="none" stroke="#333" stroke-dasharray="2 1"/><path d="M12.500 10.500l3 3-3 3-3-3z" fill="#576b5a"/></svg></button>
            <button title="Snap edge midpoints"><svg viewBox="0 0 16 16"><path d="M0 14.500h13" stroke="#000" stroke-dasharray="2 1"/><path d="M12.500 3v12" stroke="#777"/><path d="M12.500 3l2 3-2 3-2-3z" fill="#445c47"/></svg></button>
            <button title="Snap centers"><svg viewBox="0 0 16 16"><path d="M0 14.500h12.500V2" fill="none" stroke="#333" stroke-dasharray="2 1"/><circle cx="3.500" cy="6" r="1.500" fill="#9b9" stroke="#444"/></svg></button>
            <span class="rule"></span>
            <button class="on" title="Snap nodes"><svg><use href="#chain"/></svg></button>
            <button title="Snap to paths"><svg viewBox="0 0 16 16"><path d="M1 2c7-1 11 4 8 12 4 1 6-2 6-5" fill="none" stroke="#1f7a28" stroke-width="1.500"/></svg></button>
            <button title="Snap intersections"><svg viewBox="0 0 16 16"><path d="M1 12 15 4M3 15 13 1" stroke="#777" stroke-width="1.300"/><circle cx="8" cy="8" r="2" fill="#79a" stroke="#1f7a28" stroke-width="1.500"/></svg></button>
            <button title="Snap cusp nodes"><svg viewBox="0 0 16 16"><path d="M1 1c7-1 9 4 8 12 4 0 6-3 6-6" fill="none" stroke="#777" stroke-width="1.300"/><path d="M6.500 10.500h4v4h-4z" fill="#79a" stroke="#1f7a28"/></svg></button>
            <button title="Snap smooth nodes"><svg viewBox="0 0 16 16"><path d="M1 1h6c2 4 3 8 1 12 4 0 6-3 6-6" fill="none" stroke="#777" stroke-width="1.300"/><path d="M5.500 2.500h4v4h-4z" fill="#79a" stroke="#1f7a28"/></svg></button>
            <button title="Snap line midpoints"><svg viewBox="0 0 16 16"><path d="M1 15 15 2" stroke="#777"/><path d="M2 9v7M5 8v7M0 12l6-1M11 2v7M14 0v7M9 5l6-1" stroke="#d22" stroke-width="1.300"/><circle cx="8" cy="8.500" r="2" fill="#79a" stroke="#1f7a28"/></svg></button>
            <span class="rule"></span>
            <button class="on" title="Snap others"><svg><use href="#chain"/></svg></button>
            <button title="Snap object centers"><svg viewBox="0 0 16 16"><path d="M0 14.500h12.500V2" fill="none" stroke="#777"/><circle cx="5.500" cy="7.500" r="1.800" fill="#9cc" stroke="#1f7a28"/></svg></button>
            <button class="more" title="More snapping"><svg><use href="#right"/></svg></button>
        </nav>
    </main>
    <script src="rulers.js"></script>
</body>
</html>
```
FILE: styles.css
```css
* {
    box-sizing: border-box;
    margin: 0;
    padding: 0;
}
body {
    display: flex;
    flex-direction: column;
    height: 100vh;
    overflow: hidden;
    background-color: #ededed;
    color: #3c3f40;
    font-family: "Noto Sans", sans-serif;
    font-size: 13px;
    line-height: 16px;
}
.defs {
    position: absolute;
}
button, input, select {
    font: inherit;
    color: inherit;
    border: 0;
    background: none;
    min-width: 0;
    outline: 0;
}
button svg {
    display: block;
    width: 16px;
    height: 16px;
}
.on {
    background: linear-gradient(#a5a8a3, #c4c6c3 40%, #dcdcdc);
    border: 1px solid #b0b2af;
    border-radius: 3px;
}

/* top bars */
.toolbar {
    display: flex;
    align-items: center;
    gap: 4px;
    padding-left: 1px;
    flex: none;
}
.commands {
    height: 26px;
}
.controls {
    height: 41px;
    padding-top: 3px;
    font-size: 11px;
}
.toolbar > button {
    display: flex;
    align-items: center;
    justify-content: center;
    flex: none;
    width: 24px;
    height: 26px;
}
.sep {
    width: 8px;
    height: 18px;
    background: linear-gradient(#b5b5b5, #b5b5b5) center / 1px 100% no-repeat;
}
.field {
    display: flex;
    align-items: center;
    gap: 6px;
    margin-left: 5px;
}
.controls .lock {
    width: 16px;
}
.unit + .sep {
    width: 4px;
}
.spin {
    display: flex;
    width: 67px;
    height: 22px;
    border: 1px solid #b8b8b6;
    border-radius: 4px;
    background-color: #f4f4f2;
}
.spin input {
    flex: 1;
    padding-left: 4px;
}
.steps {
    display: flex;
    flex-direction: column;
    width: 14px;
    border-left: 1px solid #e4e4e2;
    color: #858583;
}
.steps button {
    display: flex;
    flex: 1;
    align-items: center;
    justify-content: center;
    min-height: 9px;
}
.steps button + button {
    border-top: 1px solid #e4e4e2;
}
.steps svg {
    width: 8px;
    height: 5px;
}
.steps .off {
    color: #c4c4c2;
}
.unit {
    position: relative;
    display: flex;
    align-items: center;
    width: 43px;
    height: 22px;
    margin-left: -2px;
    border: 1px solid #b4b4b2;
    border-radius: 3px;
    background: linear-gradient(#f8f8f8, #dedede);
}
.unit select {
    width: 100%;
    height: 100%;
    padding-left: 4px;
    appearance: none;
}
.unit svg {
    position: absolute;
    right: 5px;
    width: 10px;
    height: 7px;
    color: #858583;
    pointer-events: none;
}

/* main area */
.workspace {
    display: flex;
    flex: 1;
    min-height: 0;
}
.toolbox {
    display: flex;
    flex-direction: column;
    width: 38px;
    padding-top: 4px;
}
.toolbox button {
    display: flex;
    align-items: center;
    justify-content: center;
    flex: none;
    width: 30px;
    height: 32px;
}
.toolbox button svg {
    width: 26px;
    height: 26px;
}
.toolbox .lit {
    border: 1px solid #b8b8b6;
    border-radius: 3px;
    background: linear-gradient(#fff, #f2f2f2);
}
.toolbox .more svg, .snapbar .more svg {
    width: 8px;
    height: 10px;
}
.editor {
    display: grid;
    grid-template-columns: 13px 1fr 20px;
    grid-template-rows: 15px 1fr 16px;
    flex: 1;
    min-width: 0;
}
.hruler {
    grid-area: 1 / 2;
    width: 100%;
    height: 15px;
    border-bottom: 1px solid #333;
}
.vruler {
    grid-area: 2 / 1;
    width: 13px;
    height: 100%;
    border-right: 1px solid #333;
}
.hruler, .vruler {
    overflow: hidden;
    font-size: 9px;
    fill: #666;
    shape-rendering: crispEdges;
}
.tick {
    stroke: #333;
}
.mark {
    fill: #3c3f40;
}
.canvas {
    grid-area: 2 / 2;
    width: 100%;
    height: 100%;
    overflow: hidden;
    background-color: #fff;
}
.shape {
    fill: #cbd0e1;
}
.outline, .outline-gap, .cross {
    fill: none;
    stroke: #3c3c3c;
}
.outline-gap {
    stroke: #fff;
}
.outline {
    stroke-dasharray: 4 4;
}
.hscroll {
    grid-area: 3 / 2;
    margin-top: 4px;
    padding: 3px 0 0 36%;
    background-color: #d6d6d6;
}
.thumb {
    display: block;
    border-radius: 4px;
    background-color: #999b9c;
}
.hscroll .thumb {
    width: 36px;
    height: 7px;
}
.side {
    grid-area: 1 / 3 / 4;
    display: flex;
    flex-direction: column;
    padding-left: 1px;
}
.side button {
    width: 18px;
    height: 19px;
}
.vscroll {
    flex: 1;
    display: flex;
    flex-direction: column;
    align-items: center;
    justify-content: flex-end;
    width: 13px;
    margin: 1px 0 4px 2px;
    padding-bottom: 146px;
    background-color: #d6d6d6;
}
.vscroll .thumb {
    width: 7px;
    height: 36px;
}
.cms {
    width: 12px;
    height: 12px;
    margin-left: 3px;
}
.splitter {
    display: flex;
    flex-direction: column;
    align-items: center;
    justify-content: center;
    gap: 4px;
    width: 5px;
}
.splitter i, .grip i {
    width: 2px;
    height: 2px;
    background-color: #c2c2c2;
}

/* dock */
.dock {
    display: flex;
    flex-direction: column;
    flex: 0 0 309px;
    padding: 1px 4px 0;
    border: solid #9c9c9c;
    border-width: 1px 0 0 1px;
}
.dock-title {
    display: flex;
    align-items: center;
    flex: none;
    height: 23px;
    padding-right: 6px;
}
.framed {
    border: 1px solid #b4b4b4;
    border-top: 0;
}
.ic {
    flex: none;
    width: 16px;
    height: 16px;
}
.dock-title h2 {
    flex: 1;
    font-size: 13px;
    font-weight: normal;
}
.dock-title button {
    margin-left: 12px;
}
.dock-title button svg {
    width: 12px;
    height: 12px;
}
.fill-stroke {
    position: relative;
    flex: none;
    height: 346px;
    padding: 3px 2px;
    border: solid #b4b4b4;
    border-width: 0 1px 1px;
    overflow: hidden;
}
.tabs {
    display: flex;
    align-items: flex-end;
    height: 25px;
}
.tab {
    display: flex;
    align-items: center;
    gap: 4px;
    height: 20px;
    padding: 0 8px 0 4px;
    border: 1px solid #b0b0b0;
    border-left: 0;
    border-bottom: 0;
    border-radius: 0 3px 0 0;
    background: linear-gradient(#e6e6e6, #cfcfcf);
}
.tab svg {
    width: 12px;
    height: 12px;
}
.tab.active {
    height: 25px;
    padding-left: 7px;
    border-left: 1px solid #b0b0b0;
    border-top: 3px solid #4a90d9;
    border-radius: 4px 4px 0 0;
    background: #fff;
}
.page {
    height: 275px;
    padding: 7px 11px 0 10px;
    border: 1px solid #a8a8a8;
    border-top-color: #c0c0c0;
    background-color: #fff;
}
.paints {
    display: flex;
    gap: 2px;
}
.paints button {
    display: flex;
    align-items: center;
    justify-content: center;
    width: 26px;
    height: 27px;
}
.rule-group {
    display: flex;
    gap: 2px;
    margin-left: auto;
}
.rule-group button {
    width: 22px;
}
.page h3 {
    margin: 8px 0 4px;
    font-size: 13px;
}
.modes {
    display: flex;
    gap: 4px;
    font-size: 11px;
}
.modes button {
    flex: 1;
    height: 22px;
    border: 1px solid #b4b4b2;
    border-radius: 3px;
    background: linear-gradient(#fafafa, #dcdcdc);
}
.modes .on {
    background: linear-gradient(#a5a8a3, #dcdcdc);
}
.wheel {
    position: relative;
    width: 146px;
    height: 146px;
    margin: 4px auto 3px;
}
.wheel::before {
    content: "";
    position: absolute;
    inset: 0;
    border-radius: 50%;
    background: conic-gradient(from 90deg, #f00, #f0f, #00f, #0ff, #0f0, #ff0, #f00);
    mask: radial-gradient(circle closest-side, transparent 58px, #000 59px);
}
.wheel svg {
    position: relative;
    display: block;
}
.mix {
    isolation: isolate;
}
.add {
    mix-blend-mode: plus-lighter;
}
.alpha {
    display: flex;
    align-items: center;
    gap: 9px;
    padding: 0 7px;
}
.alpha > input {
    appearance: none;
    flex: 1;
    height: 25px;
    background:
        linear-gradient(90deg, transparent, #cbd0e1),
        repeating-conic-gradient(#999 0 25%, #666 0 50%) 0 0 / 16px 16px;
}
.alpha > input::-webkit-slider-thumb {
    appearance: none;
    width: 5px;
    height: 25px;
    background:
        linear-gradient(#000, #000) top / 5px 2px no-repeat,
        linear-gradient(#000, #000) bottom / 5px 2px no-repeat,
        linear-gradient(#000, #000) center / 1px 100% no-repeat;
}
.tall {
    width: 54px;
    height: 25px;
    background-color: #fff;
}
.wide {
    align-items: center;
    width: 100%;
    height: 26px;
    margin-top: 4px;
    padding-left: 7px;
    background-color: #fff;
}
.wide input {
    padding-right: 8px;
    text-align: right;
}
.wide .steps {
    align-self: stretch;
}
.opacity {
    align-items: flex-start;
    padding: 3px 0 0 3px;
}
.opacity .bar {
    flex: 1;
    height: 20px;
    margin-right: 5px;
    border-right: 1px solid #000;
    background-color: #4a90d9;
}
/* colour row floats over the blur field */
.overlay {
    position: absolute;
    left: 15px;
    right: 14px;
    top: 295px;
    display: flex;
    align-items: flex-start;
}
.overlay button {
    width: 16px;
    height: 26px;
    margin-right: 4px;
    padding-top: 5px;
    background-color: #ededed;
}
.overlay button svg {
    margin-top: 1px;
}
.dropper {
    width: 8px;
    height: 6px;
    margin: 6px 0 0 15px;
}
.rgba {
    height: 10px;
    margin: 6px 4px 0 auto;
    overflow: hidden;
    font-size: 11px;
    line-height: 16px;
}
.overlay input {
    width: 66px;
    height: 22px;
    margin: 2px 0 0;
    padding-left: 4px;
    border: 1px solid #b0b0ae;
    border-radius: 3px;
    background-color: #fff;
    font-size: 11px;
}
.bar-item {
    display: flex;
    align-items: center;
    flex: none;
    gap: 2px;
    height: 22px;
    margin: 2px 0 0 1px;
    padding: 0 5px 0 2px;
    border: 1px solid #b0b0b0;
    border-radius: 3px;
    background: linear-gradient(#fafafa, #d8d8d8);
    text-align: left;
}
.bar-item.on {
    background: linear-gradient(#9fa29d, #c4c6c3);
}
.bar-item .chev {
    width: 10px;
    height: 7px;
    margin-left: auto;
    color: #858583;
}
.grip {
    display: flex;
    align-items: center;
    justify-content: center;
    gap: 4px;
    height: 12px;
}
.props {
    flex: 1;
    border: 1px solid #b4b4b4;
    border-bottom: 0;
}
.dock-scroll {
    width: 12px;
    padding: 3px 2px 0 3px;
    border-left: 1px solid #fff;
    background-color: #d6d6d6;
}
.dock-scroll .thumb {
    height: 48%;
}
.snapbar {
    display: flex;
    flex-direction: column;
    align-items: center;
    width: 35px;
    padding: 4px 0 0 4px;
}
.snapbar button {
    display: flex;
    align-items: center;
    justify-content: center;
    flex: none;
    width: 26px;
    height: 28px;
}
.snapbar .on, .snapbar .more {
    height: 26px;
}
.snapbar .more {
    height: 16px;
}
.rule {
    flex: none;
    width: 18px;
    height: 1px;
    margin: 6px 0;
    background-color: #b5b5b5;
}
```
FILE: rulers.js
```js
const NS = "http://www.w3.org/2000/svg";

function add(parent, tag, attrs, text) {
    const el = document.createElementNS(NS, tag);
    for (const key in attrs) el.setAttribute(key, attrs[key]);
    if (text) el.textContent = text;
    parent.appendChild(el);
}

// horizontal ruler: a label every 25 units, ten ticks between labels
const hruler = document.getElementById("hruler");
const width = hruler.getBoundingClientRect().width;
for (let i = -8; 77 + i * 8.63 < width; i++) {
    const x = Math.round(77 + i * 8.63) + 0.5;
    const top = i % 10 === 0 ? 2 : i % 2 === 0 ? 9 : 11;
    add(hruler, "path", { class: "tick", d: `M${x} ${top}V14` });
    if (i % 10 === 0) add(hruler, "text", { x: x + 1, y: 9 }, String(75 + i * 2.5));
}

// vertical ruler: digits of each label are stacked
const vruler = document.getElementById("vruler");
const height = vruler.getBoundingClientRect().height;
for (let i = -6; 44 + i * 6.9 < height; i++) {
    const y = Math.round(44 + i * 6.9) + 0.5;
    add(vruler, "path", { class: "tick", d: `M${i % 5 === 0 ? 0 : 7} ${y}H12` });
    if (i % 10 === 0) {
        const digits = String(190 - i * 2);
        for (let n = 0; n < digits.length; n++) {
            add(vruler, "text", { x: 1, y: y + 8 + n * 8 }, digits[n]);
        }
    }
}
```
